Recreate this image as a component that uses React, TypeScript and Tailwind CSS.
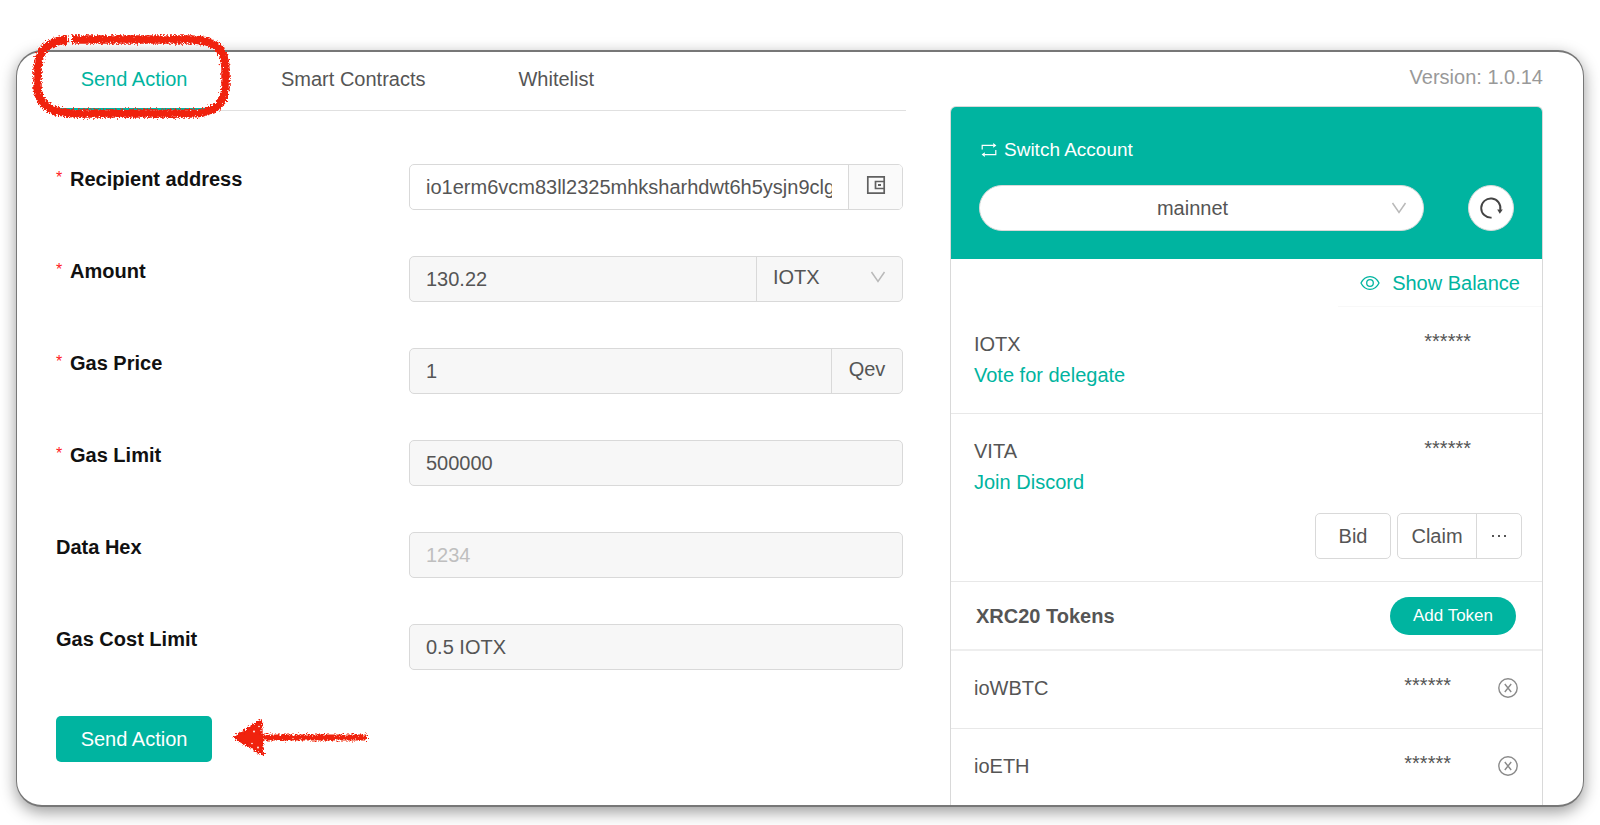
import { ReactNode } from "react";

const RED = "#f0200c";

function Chevron() {
  return (
    <svg viewBox="0 0 16 12" className="h-3 w-4" fill="none" stroke="#b9b9b9" strokeWidth="1.5" aria-hidden="true">
      <path d="M1.5 1 8 10.5 14.5 1" />
    </svg>
  );
}

function WalletIcon() {
  return (
    <svg viewBox="0 0 20 20" className="size-5" fill="none" stroke="#606060" strokeWidth="1.7" aria-hidden="true">
      <path d="M1.8 1.8h16.4v16.4H1.8zM18 6.500H9.500v7H18" />
      <path d="M12 10h3" strokeWidth="1.8" />
    </svg>
  );
}

function SwitchIcon() {
  return (
    <svg viewBox="0 0 16 16" className="size-4" fill="none" stroke="#fff" strokeWidth="1.2" aria-hidden="true">
      <path d="M1.2 7.4V3.4h11.4M14.8 8v4.6H3.4" />
      <path d="M12.2 1 15.4 3.4 12.2 5.8zM3.8 10.2.6 12.6 3.8 15z" fill="#fff" stroke="none" />
    </svg>
  );
}

function ReloadIcon() {
  return (
    <svg viewBox="0 0 24 24" className="size-6" fill="none" stroke="#444" strokeWidth="1.9" aria-hidden="true">
      <path d="M12.6 21.6A9.6 9.6 0 1 1 21.2 14" />
      <path d="M18.2 13.4h5.6L20.8 17.8z" fill="#444" stroke="none" />
    </svg>
  );
}

function EyeIcon() {
  return (
    <svg viewBox="0 0 20 16" className="h-4 w-5" fill="none" stroke="#00b4a0" strokeWidth="1.3" aria-hidden="true">
      <path d="M1 8C3 3.8 6 1.6 10 1.6S17 3.8 19 8c-2 4.2-5 6.4-9 6.4S3 12.2 1 8z" />
      <circle cx="10" cy="8" r="3.3" />
    </svg>
  );
}

function RemoveIcon() {
  return (
    <svg viewBox="0 0 20 20" className="size-5" fill="none" stroke="#8a8a8a" strokeWidth="1.4" aria-hidden="true">
      <circle cx="10" cy="10" r="9.2" />
      <path d="m6.8 6 6.4 8M13.2 6l-6.4 8" />
    </svg>
  );
}

function CrayonFilter({ id }: { id: string }) {
  return (
    <filter id={id} x="-10%" y="-30%" width="120%" height="160%">
      <feTurbulence type="fractalNoise" baseFrequency="0.6" numOctaves="2" seed="9" result="noise" />
      <feDisplacementMap in="SourceGraphic" in2="noise" scale="7" xChannelSelector="R" yChannelSelector="G" />
    </filter>
  );
}

function HighlightRing() {
  return (
    <svg viewBox="0 0 200 86" className="pointer-events-none absolute -top-[18px] -left-6 h-[86px] w-[200px]" fill="none" aria-hidden="true">
      <CrayonFilter id="crayon-ring" />
      <path
        d="M40 5.5H160C182 6 193 14 193.500 34V54C192 72 181 79 161 79.500H46C19 79.500 7 72 5.500 54V34C7 16 15 7 36 5.500"
        stroke={RED}
        strokeWidth="8.500"
        filter="url(#crayon-ring)"
      />
    </svg>
  );
}

function Arrow() {
  return (
    <svg viewBox="0 0 138 42" className="h-[42px] w-[138px]" fill={RED} aria-hidden="true">
      <CrayonFilter id="crayon-arrow" />
      <path d="M2 19.5 29 2 31 37z" stroke={RED} strokeWidth="2" strokeLinejoin="round" filter="url(#crayon-arrow)" />
      <path d="M28 16.5H135V22.5H28z" filter="url(#crayon-arrow)" />
      <g fill="#fff">
        <circle cx="22" cy="13.5" r="0.9" />
        <circle cx="27" cy="8.5" r="0.8" />
        <circle cx="20" cy="25.5" r="0.8" />
        <circle cx="26" cy="29.5" r="0.9" />
        <circle cx="29" cy="12.5" r="0.7" />
      </g>
    </svg>
  );
}

function Field({ id, label, required, tone = "bg-[#f7f7f7]", children }: { id: string; label: string; required?: boolean; tone?: string; children: ReactNode }) {
  return (
    <div className="flex h-[46px] items-start">
      <label htmlFor={id} className="flex w-[353px] shrink-0 text-xl leading-[30px] font-bold text-[#111]">
        {required && <span className="w-[14px] text-base leading-7 font-normal text-[#ff1a1f]">*</span>}
        {label}
      </label>
      <div className={`flex h-full min-w-0 flex-1 overflow-hidden rounded-[5px] border border-[#d9d9d9] ${tone}`}>{children}</div>
    </div>
  );
}

const inputClass = "h-full w-full min-w-0 flex-1 bg-transparent px-4 text-xl text-[#555] outline-none placeholder:text-[#bfbfbf]";

function SendForm() {
  return (
    <form className="flex flex-col gap-[46px] pt-[53px] pr-[3px]" onSubmit={(e) => e.preventDefault()}>
      <Field id="recipient" label="Recipient address" required tone="bg-white">
        <div className="flex min-w-0 flex-1 px-4">
          <input id="recipient" className="w-full min-w-0 text-xl text-[#555] outline-none" defaultValue="io1erm6vcm83ll2325mhksharhdwt6h5ysjn9clgh3" />
        </div>
        <button type="button" aria-label="Address book" className="flex w-[54px] items-center justify-center border-l border-[#d9d9d9] bg-[#fafafa] pb-1">
          <WalletIcon />
        </button>
      </Field>
      <Field id="amount" label="Amount" required>
        <input id="amount" className={inputClass} defaultValue="130.22" />
        <div className="relative flex w-[146px] items-center border-l border-[#d9d9d9]">
          <select aria-label="Token" className="h-full w-full appearance-none bg-transparent px-4 pb-1 text-xl text-[#555] outline-none">
            <option>IOTX</option>
          </select>
          <span className="pointer-events-none absolute right-4 pb-1">
            <Chevron />
          </span>
        </div>
      </Field>
      <Field id="gas-price" label="Gas Price" required>
        <input id="gas-price" className={inputClass} defaultValue="1" />
        <span className="flex w-[71px] items-center justify-center border-l border-[#d9d9d9] pb-1 text-xl text-[#555]">Qev</span>
      </Field>
      <Field id="gas-limit" label="Gas Limit" required>
        <input id="gas-limit" className={inputClass} defaultValue="500000" />
      </Field>
      <Field id="data-hex" label="Data Hex">
        <input id="data-hex" className={inputClass} placeholder="1234" />
      </Field>
      <Field id="gas-cost" label="Gas Cost Limit">
        <input id="gas-cost" className={inputClass} defaultValue="0.5 IOTX" />
      </Field>
      <div className="flex items-center gap-5">
        <button type="submit" className="h-[46px] w-[156px] rounded-[5px] bg-[#00b4a0] text-xl text-white">
          Send Action
        </button>
        <Arrow />
      </div>
    </form>
  );
}

function Asset({ name, link, children }: { name: string; link: string; children?: ReactNode }) {
  return (
    <div className="border-b border-[#e8e8e8] pt-[22px] pr-5 pb-[22px] pl-[23px]">
      <div className="flex justify-between pr-[51px] text-xl text-[#555]">
        <span className="leading-[31px]">{name}</span>
        <span className="leading-6">******</span>
      </div>
      <a href="#" className="block text-xl leading-[31px] text-[#00b4a0]">
        {link}
      </a>
      {children}
    </div>
  );
}

function TokenRow({ name }: { name: string }) {
  return (
    <div className="flex h-[78px] items-center border-b border-[#e8e8e8] pr-6 pb-1 pl-[23px] text-xl text-[#555]">
      <span className="flex-1">{name}</span>
      <span className="mr-[47px] pb-1.5">******</span>
      <button type="button" aria-label={`Remove ${name}`}>
        <RemoveIcon />
      </button>
    </div>
  );
}

function Wallet() {
  return (
    <aside className="flex w-[593px] shrink-0 flex-col">
      <p className="pt-[11px] text-right text-xl leading-7 text-[#999]">Version: 1.0.14</p>
      <div className="mt-[15px] flex-1 overflow-hidden rounded-t-md border border-b-0 border-[#d9d9d9]">
        <div className="bg-[#00b4a0] px-7 py-7">
          <a href="#" className="flex items-center gap-[7px] pl-0.5 text-[19px] leading-[30px] text-white">
            <SwitchIcon />
            Switch Account
          </a>
          <div className="mt-5 flex items-center justify-between">
            <div className="relative flex h-[46px] w-[445px] items-center rounded-full border border-[#d9d9d9] bg-white">
              <select aria-label="Network" className="h-full w-full appearance-none bg-transparent pr-[34px] pl-4 text-center text-xl text-[#555] outline-none">
                <option>mainnet</option>
              </select>
              <span className="pointer-events-none absolute right-4">
                <Chevron />
              </span>
            </div>
            <button type="button" aria-label="Reload" className="flex size-[46px] items-center justify-center rounded-full border border-[#d9d9d9] bg-white">
              <ReloadIcon />
            </button>
          </div>
        </div>
        <div className="flex justify-end">
          <button type="button" className="flex h-12 items-center gap-3 border-b border-[#f8f8f8] px-[22px] text-xl text-[#00b4a0]">
            <EyeIcon />
            Show Balance
          </button>
        </div>
        <Asset name="IOTX" link="Vote for delegate" />
        <Asset name="VITA" link="Join Discord">
          <div className="mt-[15px] flex justify-end gap-[6px] text-xl text-[#555]">
            <button type="button" className="h-[46px] w-[76px] rounded-[5px] border border-[#d9d9d9]">
              Bid
            </button>
            <div className="flex h-[46px] rounded-[5px] border border-[#d9d9d9]">
              <button type="button" className="w-[78px]">
                Claim
              </button>
              <button type="button" aria-label="More" className="flex w-[45px] items-center justify-center gap-1 border-l border-[#d9d9d9]">
                <span className="size-[2px] bg-[#555]" />
                <span className="size-[2px] bg-[#555]" />
                <span className="size-[2px] bg-[#555]" />
              </button>
            </div>
          </div>
        </Asset>
        <div className="flex h-[69px] items-center justify-between border-b-2 border-[#eeeeee] pr-[26px] pl-[25px]">
          <h2 className="text-xl font-bold text-[#555]">XRC20 Tokens</h2>
          <button type="button" className="h-[38px] w-[126px] rounded-full bg-[#00b4a0] text-[17px] text-white">
            Add Token
          </button>
        </div>
        <TokenRow name="ioWBTC" />
        <TokenRow name="ioETH" />
      </div>
    </aside>
  );
}

export default function App() {
  return (
    <div className="h-screen bg-white px-4 pt-[50px] pb-[18px] font-['Liberation_Sans',Arial,sans-serif]">
      <div className="relative h-full rounded-[26px] border border-y-2 border-[#777] bg-white shadow-[0_5px_16px_rgba(0,0,0,0.4)]">
        <div className="flex h-full justify-between overflow-hidden rounded-[25px] pr-10 pl-[39px]">
          <main className="w-[850px] shrink-0">
            <nav className="flex h-[59px] border-b border-[#e0e0e0] text-xl leading-[54px] text-[#555]">
              <a href="#" className="w-[156px] border-b-2 border-[#00b4a0] text-center text-[#00b4a0]">
                Send Action
              </a>
              <a href="#" className="ml-[69px]">
                Smart Contracts
              </a>
              <a href="#" className="ml-[93px]">
                Whitelist
              </a>
            </nav>
            <SendForm />
          </main>
          <Wallet />
        </div>
        <div className="absolute top-0 left-[39px]">
          <HighlightRing />
        </div>
      </div>
    </div>
  );
}
